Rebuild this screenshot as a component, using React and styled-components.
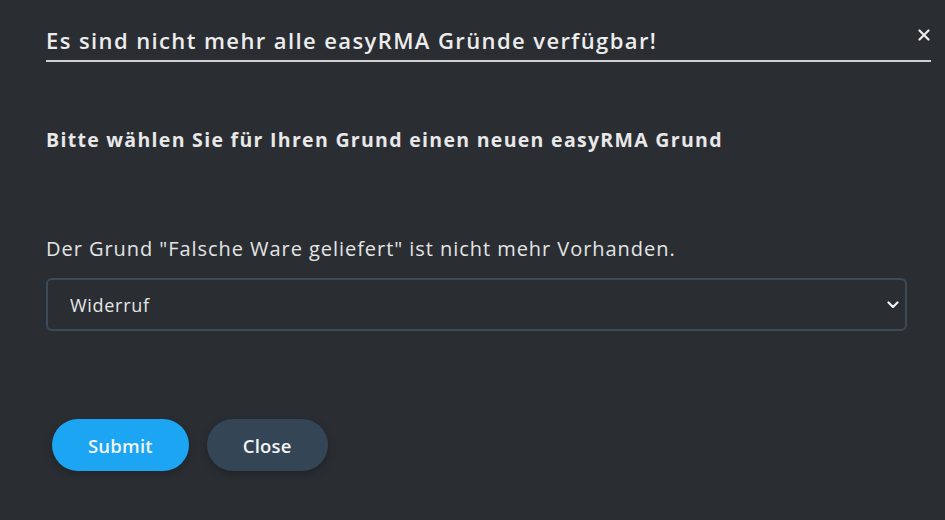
import React from "react";
import styled, { createGlobalStyle } from "styled-components";

const Global = createGlobalStyle`
  html, body { margin: 0; padding: 0; background: #2a2e33; }
  body { font-family: "Open Sans", "Noto Sans", sans-serif; color: #e6e6e6; }
  * { box-sizing: border-box; }
`;

const Modal = styled.div`
  width: 945px;
  height: 520px;
  background: #2a2e33;
  padding: 22px 14px 0 46px;
  display: flex;
  flex-direction: column;
`;

const Header = styled.div`
  display: flex;
  align-items: flex-start;
`;

const Title = styled.h2`
  flex: 1;
  margin: 0;
  font-size: 22px;
  font-weight: 600;
  letter-spacing: 1.4px;
  line-height: 37px;
  color: #ececec;
  border-bottom: 2px solid #cfd1d3;
  padding-bottom: 1px;
`;

const CloseX = styled.button`
  background: none;
  border: none;
  padding: 0;
  margin: 6px 0 0 -14px;
  width: 14px;
  height: 14px;
  cursor: pointer;
  display: flex;
  align-items: center;
  justify-content: center;
`;

const Body = styled.div`
  padding-right: 24px;
  display: flex;
  flex-direction: column;
`;

const Lead = styled.p`
  margin: 64px 0 0;
  font-size: 19.5px;
  font-weight: 700;
  letter-spacing: 1.3px;
  line-height: 28px;
  color: #e8e8e8;
`;

const Info = styled.p`
  margin: 81px 0 0;
  font-size: 20px;
  font-weight: 400;
  letter-spacing: 0.95px;
  line-height: 28px;
  color: #e4e4e4;
`;

const SelectWrap = styled.div`
  position: relative;
  margin-top: 15px;
`;

const Select = styled.select`
  width: 100%;
  height: 53px;
  appearance: none;
  background: #2a2e33;
  border: 2px solid #3b4b5a;
  border-radius: 6px;
  color: #e6e6e6;
  font-family: "Open Sans", sans-serif;
  font-size: 18px;
  letter-spacing: 0.7px;
  padding: 0 40px 0 22px;
  outline: none;
`;

const Chevron = styled.svg`
  position: absolute;
  right: 8px;
  top: 50%;
  transform: translateY(-50%);
  pointer-events: none;
`;

const Actions = styled.div`
  display: flex;
  gap: 18px;
  margin-top: 88px;
  padding-left: 6px;
`;

const Btn = styled.button`
  height: 52px;
  padding: 0 ${(p) => p.$px}px;
  border: none;
  border-radius: 26px;
  background: ${(p) => p.$bg};
  color: #f2f4f6;
  font-family: "Open Sans", sans-serif;
  font-size: 18.5px;
  font-weight: 600;
  letter-spacing: 0.2px;
  box-shadow: 0 3px 8px rgba(0, 0, 0, 0.25);
  cursor: pointer;
`;

export default function App() {
  return (
    <>
      <Global />
      <Modal>
        <Header>
          <Title>Es sind nicht mehr alle easyRMA Gründe verfügbar!</Title>
          <CloseX aria-label="close">
            <svg width="12" height="12" viewBox="0 0 12 12">
              <path d="M1.5 1.5 L10.5 10.5 M10.5 1.5 L1.5 10.5" stroke="#ececec" strokeWidth="2.2" strokeLinecap="round" />
            </svg>
          </CloseX>
        </Header>
        <Body>
          <Lead>Bitte wählen Sie für Ihren Grund einen neuen easyRMA Grund</Lead>
          <Info>Der Grund "Falsche Ware geliefert" ist nicht mehr Vorhanden.</Info>
          <SelectWrap>
            <Select defaultValue="Widerruf">
              <option>Widerruf</option>
            </Select>
            <Chevron width="12" height="8" viewBox="0 0 12 8">
              <path d="M1.5 1.5 L6 6 L10.5 1.5" stroke="#f0f0f0" strokeWidth="2.2" fill="none" strokeLinecap="round" strokeLinejoin="round" />
            </Chevron>
          </SelectWrap>
        </Body>
        <Actions>
          <Btn $bg="#1ca5f3" $px={36}>Submit</Btn>
          <Btn $bg="#344555" $px={36}>Close</Btn>
        </Actions>
      </Modal>
    </>
  );
}
